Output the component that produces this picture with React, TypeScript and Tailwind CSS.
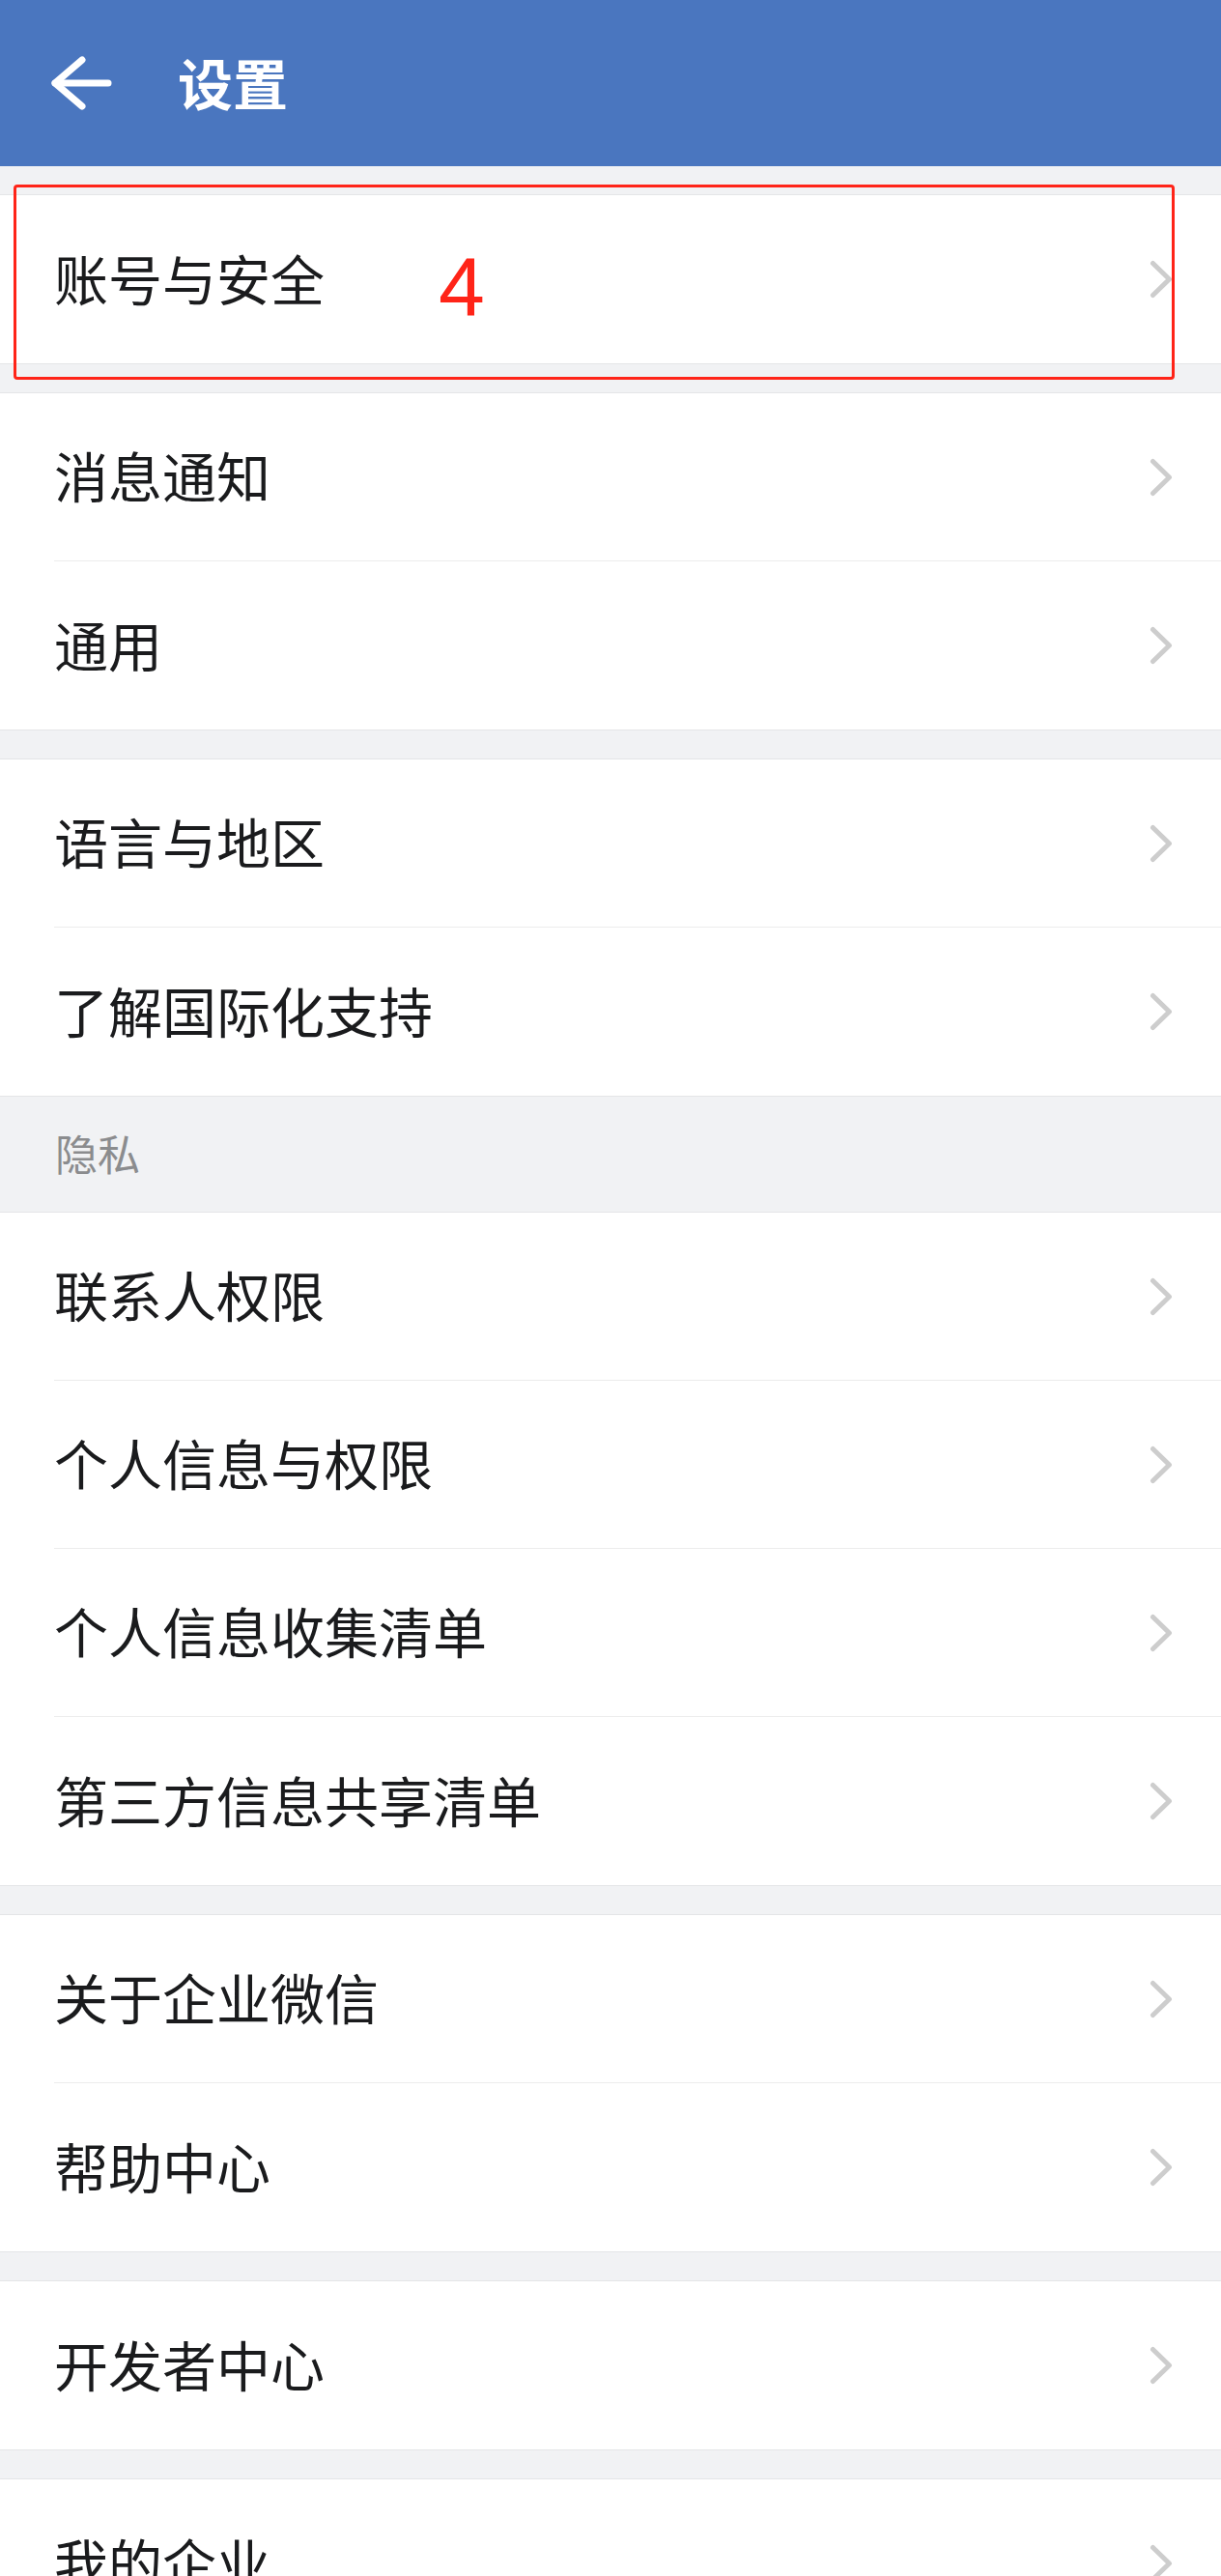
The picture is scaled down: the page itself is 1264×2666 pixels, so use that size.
import React from "react";

const font = { fontFamily: '"Noto Sans CJK SC", "Noto Sans", sans-serif' };

const groups: string[][] = [
  ["账号与安全"],
  ["消息通知", "通用"],
  ["语言与地区", "了解国际化支持"],
  ["联系人权限", "个人信息与权限", "个人信息收集清单", "第三方信息共享清单"],
  ["关于企业微信", "帮助中心"],
  ["开发者中心"],
  ["我的企业"],
];

function Chevron() {
  return (
    <svg width="24" height="40" viewBox="0 0 24 40" fill="none" className="shrink-0">
      <path d="M3.5 3.5L20.5 20L3.5 36.5" stroke="#cdcdcd" strokeWidth="5" strokeLinecap="round" strokeLinejoin="round" />
    </svg>
  );
}

function Group({ items }: { items: string[] }) {
  return (
    <div className="bg-white border-y border-[#e4e5e7]">
      {items.map((label, i) => (
        <div key={label} className="h-[174px] pl-[56px]">
          <div
            className={
              "h-full flex items-center justify-between pr-[50px] " +
              (i < items.length - 1 ? "border-b border-[#ececec]" : "")
            }
          >
            <span className="pb-[5px] text-[56px] leading-none text-[#1a1b1d]">{label}</span>
            <Chevron />
          </div>
        </div>
      ))}
    </div>
  );
}

export default function App() {
  return (
    <div className="relative min-h-[2666px] w-[1264px] bg-[#f1f2f4] overflow-hidden" style={font}>
      <div className="h-[172px] bg-[#4a76bf] flex items-center">
        <svg width="64" height="56" viewBox="0 0 64 56" fill="none" className="ml-[52px] shrink-0">
          <path d="M60 28H5" stroke="white" strokeWidth="7" strokeLinecap="round" />
          <path d="M33 4L5 28L33 52" stroke="white" strokeWidth="7" strokeLinecap="round" strokeLinejoin="round" />
        </svg>
        <span className="ml-[68px] pb-[3px] text-[57px] font-bold leading-none text-white">设置</span>
      </div>

      <div className="h-[29px]" />
      <Group items={groups[0]} />
      <div className="h-[29px]" />
      <Group items={groups[1]} />
      <div className="h-[29px]" />
      <Group items={groups[2]} />
      <div className="h-[119px] flex items-center pl-[57px]">
        <span className="pb-[4px] text-[44px] leading-none text-[#8b8c8e]">隐私</span>
      </div>
      <Group items={groups[3]} />
      <div className="h-[29px]" />
      <Group items={groups[4]} />
      <div className="h-[29px]" />
      <Group items={groups[5]} />
      <div className="h-[29px]" />
      <Group items={groups[6]} />

      <div className="absolute left-[14px] top-[191px] w-[1202px] h-[202px] border-[3px] border-[#ff2418] rounded-[4px] pointer-events-none" />
      <span
        className="absolute left-[454px] top-[253px] text-[86px] leading-none text-[#ff2418]"
        style={{ fontFamily: '"Liberation Sans", Arial, sans-serif' }}
      >
        4
      </span>
    </div>
  );
}
